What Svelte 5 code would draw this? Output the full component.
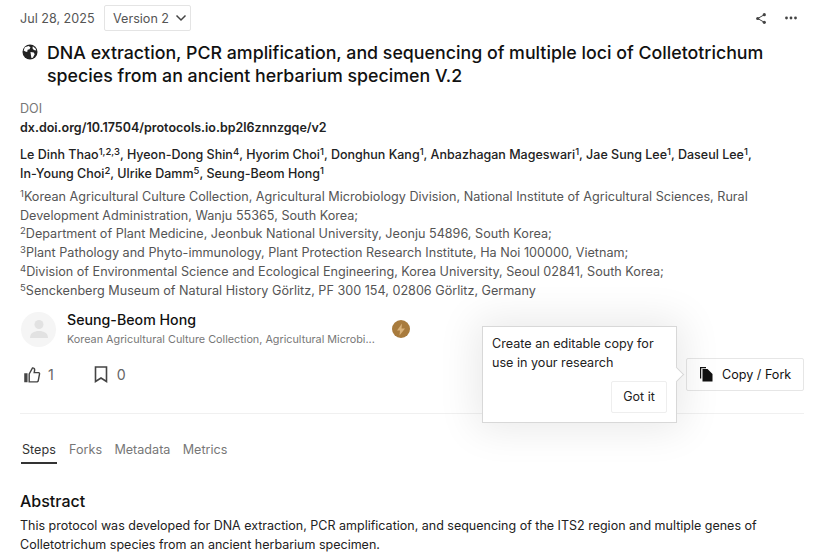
<script>
  const authors1 = [
    ['Le Dinh Thao', '1,2,3'], ['Hyeon-Dong Shin', '4'], ['Hyorim Choi', '1'], ['Donghun Kang', '1'],
    ['Anbazhagan Mageswari', '1'], ['Jae Sung Lee', '1'], ['Daseul Lee', '1']
  ];
  const authors2 = [['In-Young Choi', '2'], ['Ulrike Damm', '5'], ['Seung-Beom Hong', '1']];
  const affiliations = [
    ['1', 'Korean Agricultural Culture Collection, Agricultural Microbiology Division, National Institute of Agricultural Sciences, Rural Development Administration, Wanju 55365, South Korea;'],
    ['2', 'Department of Plant Medicine, Jeonbuk National University, Jeonju 54896, South Korea;'],
    ['3', 'Plant Pathology and Phyto-immunology, Plant Protection Research Institute, Ha Noi 100000, Vietnam;'],
    ['4', 'Division of Environmental Science and Ecological Engineering, Korea University, Seoul 02841, South Korea;'],
    ['5', 'Senckenberg Museum of Natural History Görlitz, PF 300 154, 02806 Görlitz, Germany']
  ];
  const tabs = ['Steps', 'Forks', 'Metadata', 'Metrics'];
</script>

<div class="page">
  <header class="top">
    <span class="date">Jul 28, 2025</span>
    <button class="version">
      <span>Version 2</span>
      <svg width="12" height="8" viewBox="0 0 12 8" fill="none" stroke="#444" stroke-width="1.5"><path d="M1.5 1.5 6 6l4.5-4.5" /></svg>
    </button>
    <div class="top-actions">
      <svg width="10" height="11" viewBox="0 0 10 11" fill="#444">
        <circle cx="8.3" cy="1.700" r="1.600" /><circle cx="1.700" cy="5.500" r="1.600" /><circle cx="8.300" cy="9.300" r="1.600" />
        <path d="M8.300 1.700 1.700 5.500l6.600 3.800" fill="none" stroke="#444" stroke-width="1" />
      </svg>
      <svg width="12" height="4" viewBox="0 0 12 4" fill="#444">
        <circle cx="1.500" cy="2" r="1.400" /><circle cx="6" cy="2" r="1.400" /><circle cx="10.500" cy="2" r="1.400" />
      </svg>
    </div>
  </header>

  <h1 class="title">
    <svg class="globe" width="16" height="16" viewBox="0 0 17 17">
      <circle cx="8.500" cy="8.500" r="8" fill="#222" />
      <path d="M3 3.500 7 2l2 1.500-1 2-2 .5-.5 2.500L3.500 8 1.800 7zM9 8.500l3.500.5 1 2-2 3.500-1.500.5-.5-3zM11.500 2.500l3 2.500.6 2-2.500-.5-1.500-2z" fill="#fff" />
    </svg>
    <span>DNA extraction, PCR amplification, and sequencing of multiple loci of Colletotrichum species from an ancient herbarium specimen V.2</span>
  </h1>

  <div class="doi-label">DOI</div>
  <div class="doi">dx.doi.org/10.17504/protocols.io.bp2l6znnzgqe/v2</div>

  <div class="authors">
    <div>{#each authors1 as a, i}{a[0]}<sup>{a[1]}</sup>{i < authors1.length - 1 ? ', ' : ','}{' '}{/each}</div>
    <div>{#each authors2 as a, i}{a[0]}<sup>{a[1]}</sup>{i < authors2.length - 1 ? ', ' : ''}{/each}</div>
  </div>

  <div class="affils">
    {#each affiliations as a}
      <div><sup>{a[0]}</sup>{a[1]}</div>
    {/each}
  </div>

  <div class="person">
    <div class="avatar">
      <svg width="20" height="20" viewBox="0 0 20 20" fill="#e2e2e2">
        <circle cx="10" cy="5.500" r="4.500" /><path d="M1 19c0-5 4-7 9-7s9 2 9 7z" />
      </svg>
    </div>
    <div class="person-text">
      <div class="person-name">Seung-Beom Hong</div>
      <div class="person-org">Korean Agricultural Culture Collection, Agricultural Microbi...</div>
    </div>
    <div class="badge">
      <svg width="12" height="13" viewBox="0 0 12 13" fill="#d9b27a"><path d="M7 .5 2 7.500h3L4.500 12.500 10 5.500H6.500z" /></svg>
    </div>
  </div>

  <div class="actions">
    <div class="stats">
      <span class="stat like">
        <svg width="17" height="17" viewBox="0 0 18 17" fill="none" stroke="#444" stroke-width="1.500">
          <path d="M1 8h2v8H1z" fill="#444" /><path d="M5.500 8 9 1.500c1.500 0 2.300 1 2.300 2.200L10.800 6.500h5l.7 1-1.500 8-1 .8H5.500z" />
        </svg>
        <span>1</span>
      </span>
      <span class="stat">
        <svg width="14" height="17" viewBox="0 0 14 17" fill="none" stroke="#444" stroke-width="1.600"><path d="M1.500 1h11v14.500L7 12l-5.500 3.500z" /></svg>
        <span>0</span>
      </span>
    </div>
    <div class="fork-wrap">
      <div class="popover">
        <p>Create an editable copy for use in your research</p>
        <div class="pop-foot"><button class="got">Got it</button></div>
        <span class="arrow"></span>
      </div>
      <button class="fork">
        <svg width="14" height="16" viewBox="0 0 14 16" fill="#111">
          <path d="M1 1h6v1.200H2.200V12.500H1z" /><path d="M3.500 3H8.500L13.500 8V15.500H3.500z" />
        </svg>
        <span>Copy / Fork</span>
      </button>
    </div>
  </div>

  <nav class="tabs">
    {#each tabs as t, i}
      <span class="tab" class:active={i === 0}>{t}</span>
    {/each}
  </nav>

  <h2 class="abstract-h">Abstract</h2>
  <p class="abstract">This protocol was developed for DNA extraction, PCR amplification, and sequencing of the ITS2 region and multiple genes of Colletotrichum species from an ancient herbarium specimen.</p>
</div>

<style>
  :global(body) {
    background: #fff;
    font-family: Inter, "Liberation Sans", sans-serif;
    overflow: hidden;
  }

  .page {
    width: 818px;
    height: 555px;
    box-sizing: border-box;
    padding: 5px 14px 0 20px;
    overflow: hidden;
    color: #111;
  }

  button {
    font-family: inherit;
    background: #fff;
    cursor: pointer;
  }

  .top {
    display: flex;
    align-items: center;
    height: 26px;
  }

  .date {
    width: 84px;
    flex: none;
    font-size: 12.600px;
    color: #555;
  }

  .version {
    height: 26px;
    width: 87px;
    flex: none;
    display: flex;
    align-items: center;
    gap: 6px;
    padding: 0 8px;
    border: 1px solid #e4e4e4;
    border-radius: 2px;
    font-size: 12.600px;
    color: #555;
    white-space: nowrap;
  }

  .version svg {
    flex: none;
  }

  .top-actions {
    margin-left: auto;
    display: flex;
    align-items: center;
    gap: 19px;
    padding-right: 7px;
  }

  .title {
    margin: 10px 0 0;
    display: flex;
    gap: 9px;
    font-size: 17.800px;
    line-height: 23px;
    font-weight: 500;
    color: #111;
  }

  .globe {
    flex: none;
    margin-top: 3px;
    margin-left: 2px;
  }

  .doi-label {
    margin-top: 13px;
    font-size: 12.600px;
    line-height: 18px;
    color: #777;
  }

  .doi {
    font-size: 12.500px;
    line-height: 20px;
    font-weight: 600;
    color: #222;
  }

  .authors {
    margin-top: 7px;
    font-size: 12.500px;
    line-height: 19px;
    font-weight: 500;
    color: #222;
  }

  sup {
    font-size: 9.500px;
    line-height: 0;
    vertical-align: 4px;
  }

  .affils {
    margin-top: 5px;
    font-size: 12.630px;
    line-height: 18.700px;
    color: #555;
  }

  .person {
    margin-top: 11px;
    display: flex;
    align-items: center;
    height: 36px;
    padding-left: 1px;
  }

  .avatar {
    width: 35px;
    height: 35px;
    border-radius: 50%;
    background: #f5f5f5;
    display: flex;
    align-items: center;
    justify-content: center;
    margin-right: 11px;
  }

  .person-name {
    font-size: 14.200px;
    font-weight: 500;
    line-height: 18px;
  }

  .person-org {
    margin-top: 4px;
    font-size: 10.800px;
    line-height: 14px;
    color: #777;
  }

  .badge {
    width: 18px;
    height: 18px;
    border-radius: 50%;
    background: #a87b3d;
    display: flex;
    align-items: center;
    justify-content: center;
    margin-left: 17px;
  }

  .actions {
    margin-top: 8px;
    display: flex;
    justify-content: space-between;
    align-items: center;
    height: 38px;
  }

  .stats {
    display: flex;
    align-items: center;
    gap: 40px;
    padding-left: 4px;
  }

  .stat {
    display: flex;
    align-items: center;
    gap: 9px;
    font-size: 14.200px;
    color: #666;
  }

  .stat.like {
    gap: 7px;
  }

  .fork-wrap {
    position: relative;
  }

  .fork {
    width: 118px;
    height: 33px;
    display: flex;
    align-items: center;
    gap: 9px;
    padding: 0 12px;
    border: 1px solid #e6e6e6;
    border-radius: 2px;
    font-size: 12.600px;
    font-weight: 400;
    color: #111;
    white-space: nowrap;
  }

  .fork svg {
    flex: none;
  }

  .popover {
    position: absolute;
    right: 127px;
    top: -32px;
    width: 195px;
    height: 97px;
    box-sizing: border-box;
    padding: 7px 9px;
    background: #fff;
    border: 1px solid #d8d8d8;
    box-shadow: 0 0 40px 6px rgba(0, 0, 0, 0.09);
    z-index: 2;
  }

  .popover p {
    margin: 0;
    font-size: 12.600px;
    line-height: 19px;
    color: #222;
  }

  .pop-foot {
    display: flex;
    justify-content: flex-end;
    margin-top: 9px;
  }

  .got {
    width: 56px;
    height: 32px;
    border: 1px solid #eee;
    border-radius: 2px;
    font-size: 12.500px;
    font-weight: 400;
    color: #222;
  }

  .arrow {
    position: absolute;
    right: -6px;
    top: 42px;
    width: 10px;
    height: 10px;
    background: #fff;
    border-top: 1px solid #d8d8d8;
    border-right: 1px solid #d8d8d8;
    transform: rotate(45deg);
  }

  .tabs {
    margin-top: 20px;
    padding-top: 26px;
    border-top: 1px solid #f0f0f0;
    display: flex;
    gap: 12.300px;
    padding-left: 2px;
    font-size: 12.600px;
    color: #777;
  }

  .tab {
    line-height: 20px;
    padding-bottom: 2px;
  }

  .tab.active {
    color: #333;
    box-shadow: 0 2px 0 #333;
    margin-left: -1px;
    padding: 0 1px 2px;
  }

  .abstract-h {
    margin: 28px 0 0;
    font-size: 16px;
    line-height: 22px;
    font-weight: 500;
  }

  .abstract {
    margin: 4px 0 0;
    font-size: 12.500px;
    line-height: 19px;
    color: #222;
  }
</style>
